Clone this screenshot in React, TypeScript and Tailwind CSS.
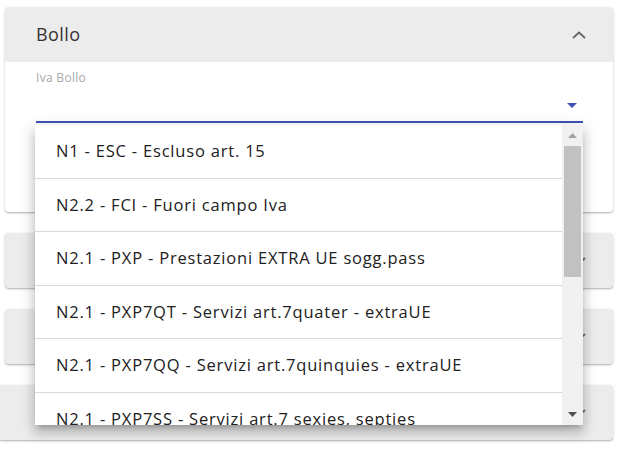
import React from 'react';

const options = [
  'N1 - ESC - Escluso art. 15',
  'N2.2 - FCI - Fuori campo Iva',
  'N2.1 - PXP - Prestazioni EXTRA UE sogg.pass',
  'N2.1 - PXP7QT - Servizi art.7quater - extraUE',
  'N2.1 - PXP7QQ - Servizi art.7quinquies - extraUE',
  'N2.1 - PXP7SS - Servizi art.7 sexies, septies',
];

const Chevron: React.FC<{ up?: boolean }> = ({ up }) => (
  <svg width="14" height="8" viewBox="0 0 14 8" className="block">
    <path
      d={up ? 'M1 7 L7 1.5 L13 7' : 'M1 1 L7 6.5 L13 1'}
      fill="none"
      stroke="#666"
      strokeWidth="1.8"
    />
  </svg>
);

const CollapsedCard: React.FC<{ flush?: boolean }> = ({ flush }) => (
  <div
    className={`${flush ? 'ml-0 rounded-r-[4px]' : 'ml-[5px] rounded-[4px]'} h-[55px] bg-[#ececec] shadow-[0_1px_3px_rgba(0,0,0,0.2),0_1px_1px_rgba(0,0,0,0.14)] flex items-center justify-end pr-[27px]`}
  >
    <Chevron />
  </div>
);

const App: React.FC = () => {
  return (
    <div
      className="w-[619px] h-[453px] bg-white overflow-hidden"
      style={{ fontFamily: '"Open Sans", "Noto Sans", sans-serif' }}
    >
      <div className="pt-[7px] pr-[6px] flex flex-col gap-[21px]">
        {/* open card */}
        <div className="ml-[5px] h-[205px] rounded-[4px] bg-white shadow-[0_1px_3px_rgba(0,0,0,0.2),0_1px_1px_rgba(0,0,0,0.14)]">
          <div className="h-[55px] bg-[#ececec] rounded-t-[4px] flex items-center justify-between pl-[31px] pr-[27px]">
            <span className="text-[18px] tracking-[0.4px] text-[#333]">Bollo</span>
            <Chevron up />
          </div>
          <div className="pl-[31px] pr-[30px] pt-[9px]">
            <div className="relative">
              <div className="text-[12px] leading-[14px] tracking-[0.3px] text-[#a8a8a8]">Iva Bollo</div>
              <div className="h-[38px] flex items-center justify-end pr-[6px] pt-[4px] border-b-2 border-[#3f51b5]">
                <svg width="10" height="5" viewBox="0 0 10 5" className="block">
                  <path d="M0 0 L10 0 L5 5 Z" fill="#3f51b5" />
                </svg>
              </div>

              {/* dropdown menu */}
              <div className="absolute left-[-1px] top-[54px] w-[548px] h-[300px] bg-white z-10 flex shadow-[0_5px_5px_-3px_rgba(0,0,0,0.2),0_8px_10px_1px_rgba(0,0,0,0.14),0_3px_14px_2px_rgba(0,0,0,0.12)] overflow-hidden">
                <ul className="flex-1 overflow-hidden">
                  {options.map((o) => (
                    <li
                      key={o}
                      className="h-[53.6px] flex items-center pl-[21px] border-b border-[#d9d9d9] text-[16.5px] tracking-[0.8px] text-[#212121] whitespace-nowrap"
                    >
                      {o}
                    </li>
                  ))}
                </ul>
                <div className="w-[21px] bg-[#f1f1f1] flex flex-col items-center">
                  <div className="h-[21px] flex items-center justify-center">
                    <svg width="9" height="5" viewBox="0 0 9 5">
                      <path d="M0 5 L4.5 0 L9 5 Z" fill="#a3a3a3" />
                    </svg>
                  </div>
                  <div className="w-[17px] h-[131px] bg-[#c1c1c1]" />
                  <div className="flex-1" />
                  <div className="h-[21px] flex items-center justify-center">
                    <svg width="9" height="5" viewBox="0 0 9 5">
                      <path d="M0 0 L9 0 L4.5 5 Z" fill="#505050" />
                    </svg>
                  </div>
                </div>
              </div>
            </div>
          </div>
        </div>

        <CollapsedCard />
        <CollapsedCard />
        <CollapsedCard flush />
      </div>
    </div>
  );
};

export default App;
